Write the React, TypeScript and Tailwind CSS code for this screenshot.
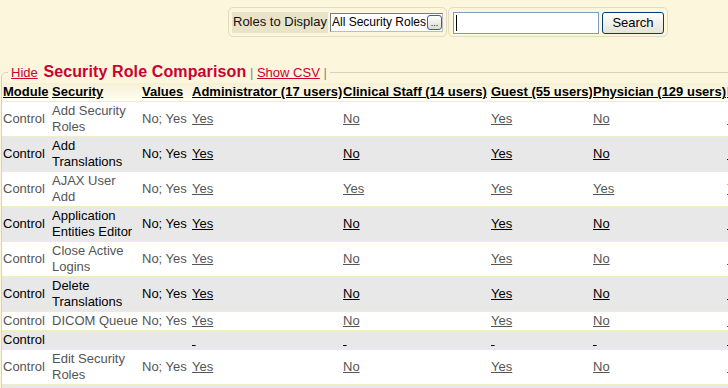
import React from "react";

type Row = {
  security: string;
  values: string;
  roles: string[];
};

const roleHeaders = [
  "Administrator (17 users)",
  "Clinical\u00a0Staff (14 users)",
  "Guest (55 users)",
  "Physician (129 users)",
  "Resident (42 users)",
];

const rows: Row[] = [
  { security: "Add Security Roles", values: "No; Yes", roles: ["Yes", "No", "Yes", "No", ""] },
  { security: "Add Translations", values: "No; Yes", roles: ["Yes", "No", "Yes", "No", ""] },
  { security: "AJAX User Add", values: "No; Yes", roles: ["Yes", "Yes", "Yes", "Yes", "Yes"] },
  { security: "Application Entities Editor", values: "No; Yes", roles: ["Yes", "No", "Yes", "No", ""] },
  { security: "Close Active Logins", values: "No; Yes", roles: ["Yes", "No", "Yes", "No", ""] },
  { security: "Delete Translations", values: "No; Yes", roles: ["Yes", "No", "Yes", "No", ""] },
  { security: "DICOM Queue", values: "No; Yes", roles: ["Yes", "No", "Yes", "No", ""] },
  { security: "", values: "", roles: ["", "", "", "", ""] },
  { security: "Edit Security Roles", values: "No; Yes", roles: ["Yes", "No", "Yes", "No", ""] },
  { security: "Edit Translations", values: "No; Yes", roles: ["Yes", "No", "Yes", "No", ""] },
];

function Toolbar() {
  return (
    <div className="flex justify-end pt-[7px] pr-[60px] gap-[1px]">
      {/* role picker */}
      <div className="flex h-[30px] w-[219px] items-center gap-[2px] rounded-[5px] border border-[#e2dcc1] pl-[3px]">
        <div className="flex h-[21px] w-[96px] items-center bg-[#e9e4c8] pl-[1px] whitespace-nowrap text-[#111]">
          Roles to Display
        </div>
        <div className="relative flex h-[19px] w-[113px] items-center border border-t-[#7a7a7a] border-l-[#7a7a7a] border-r-[#bdbdbd] border-b-[#bdbdbd] bg-white pl-[1px] text-[12px] whitespace-nowrap overflow-hidden">
          All Security Roles
          <span className="absolute right-[0px] top-[1px] flex h-[15px] w-[15px] items-end justify-center rounded-[3px] border border-[#3d5f9a] bg-gradient-to-b from-white to-[#dcdcd4] text-[9px] leading-[9px] pb-[1px]">
            ...
          </span>
        </div>
      </div>

      {/* search */}
      <div className="flex h-[30px] w-[220px] items-center gap-[3px] rounded-[5px] border border-[#e2dcc1] pl-[4px] pt-[1px]">
        <div className="flex h-[22px] w-[146px] items-center border border-[#7f9db9] bg-white pl-[2px]">
          <span className="h-[16px] w-[1px] bg-black" />
        </div>
        <button className="h-[22px] w-[62px] rounded-[3px] border border-[#003c74] bg-gradient-to-b from-white to-[#e6e3d6] text-[13px] text-black">
          Search
        </button>
      </div>
    </div>
  );
}

function RoleCell({ value, dark }: { value: string; dark: boolean }) {
  return (
    <td className="px-[1px] py-[1px] align-middle">
      <span className={`underline ${dark ? "text-black" : "text-[#555]"}`}>
        {value || "\u00a0"}
      </span>
    </td>
  );
}

export default function App() {
  return (
    <div className="h-[388px] w-[728px] overflow-hidden bg-[#fbf6dc] font-['Liberation_Sans',Arial,sans-serif] text-[13px] leading-[16px]">
      <Toolbar />

      <fieldset className="ml-[1px] mt-[26px] w-[900px] rounded-tl-[5px] border border-[#d6d2c0]">
        <legend className="ml-[6px] px-[3px] leading-[18px] whitespace-nowrap">
          <a className="text-[13px] text-[#cc0033] underline">Hide</a>{" "}
          <span className="ml-[2px] text-[16px] font-bold tracking-[0.12px] text-[#cc0033]">
            Security Role Comparison
          </span>{" "}
          <span className="text-[#888]">|</span>{" "}
          <a className="text-[13px] text-[#cc0033] underline">Show CSV</a>{" "}
          <span className="text-[#888]">|</span>
        </legend>

        <table className="mt-[1px] w-[874px] table-fixed border-collapse text-left">
          <colgroup>
            <col className="w-[49px]" />
            <col className="w-[90px]" />
            <col className="w-[50px]" />
            <col className="w-[151px]" />
            <col className="w-[148px]" />
            <col className="w-[102px]" />
            <col className="w-[134px]" />
            <col className="w-[150px]" />
          </colgroup>
          <thead>
            <tr className="bg-gradient-to-b from-[#f6f0d4] to-[#fffef6] border-b border-[#f2edc8]">
              {["Module", "Security", "Values", ...roleHeaders].map((h) => (
                <th key={h} className="px-[1px] py-[1px] font-bold whitespace-nowrap overflow-hidden">
                  <span className="underline text-black">{h}</span>
                </th>
              ))}
            </tr>
          </thead>
          <tbody>
            {rows.map((r, i) => {
              const dark = i % 2 === 1;
              return (
                <tr
                  key={i}
                  className={`border-b border-[#f2edc8] ${dark ? "bg-[#e8e8e8] text-black" : "bg-white text-[#555]"}`}
                >
                  <td className="px-[1px] py-[1px]">Control</td>
                  <td className="px-[1px] py-[1px]">{r.security}</td>
                  <td className="px-[1px] py-[1px] whitespace-nowrap">{r.values}</td>
                  {r.roles.map((v, j) => (
                    <RoleCell key={j} value={v} dark={dark} />
                  ))}
                </tr>
              );
            })}
          </tbody>
        </table>
      </fieldset>
    </div>
  );
}
